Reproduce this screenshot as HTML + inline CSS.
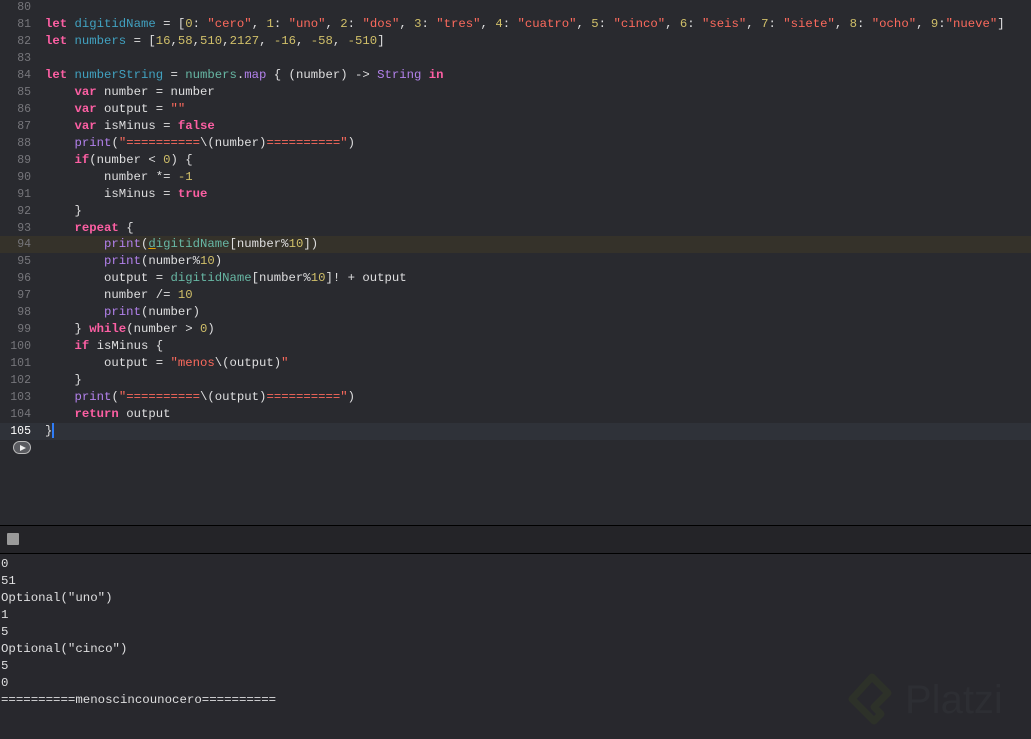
<!DOCTYPE html><html><head><style>
body{margin:0;width:1031px;height:739px;background:#292a2f;overflow:hidden;font-family:"Liberation Mono",monospace;font-size:12.3px;color:#dfdfe0;position:relative}
.l{position:absolute;left:0;width:1031px;height:17px;line-height:17px;white-space:pre}
.n{position:absolute;left:0;width:31px;text-align:right;color:#76767b;font-size:11.5px}
.c{position:absolute;left:45px}
.k{color:#fc5fa3;font-weight:bold}.s{color:#fc6a5d}.m{color:#d0bf69}.d{color:#41a1c0}.p{color:#67b7a4}.f{color:#b281eb}
.con{position:absolute;left:0;top:525px;width:1031px;height:214px;background:#28282d}
.o{position:absolute;left:1px;height:17px;line-height:17px;white-space:pre;font-size:12.4px}
</style></head><body>
<div class="l" style="top:236px;background:#35322a"></div>
<div class="l" style="top:423px;background:#2f3239"></div>
<div class="l" style="top:-1px"><span class="n">80</span></div>
<div class="l" style="top:16px"><span class="n">81</span><span class="c"><span class="k">let</span> <span class="d">digitidName</span> = [<span class="m">0</span>: <span class="s">"cero"</span>, <span class="m">1</span>: <span class="s">"uno"</span>, <span class="m">2</span>: <span class="s">"dos"</span>, <span class="m">3</span>: <span class="s">"tres"</span>, <span class="m">4</span>: <span class="s">"cuatro"</span>, <span class="m">5</span>: <span class="s">"cinco"</span>, <span class="m">6</span>: <span class="s">"seis"</span>, <span class="m">7</span>: <span class="s">"siete"</span>, <span class="m">8</span>: <span class="s">"ocho"</span>, <span class="m">9</span>:<span class="s">"nueve"</span>]</span></div>
<div class="l" style="top:33px"><span class="n">82</span><span class="c"><span class="k">let</span> <span class="d">numbers</span> = [<span class="m">16</span>,<span class="m">58</span>,<span class="m">510</span>,<span class="m">2127</span>, <span class="m">-16</span>, <span class="m">-58</span>, <span class="m">-510</span>]</span></div>
<div class="l" style="top:50px"><span class="n">83</span></div>
<div class="l" style="top:67px"><span class="n">84</span><span class="c"><span class="k">let</span> <span class="d">numberString</span> = <span class="p">numbers</span>.<span class="f">map</span> { (number) -&gt; <span class="f">String</span> <span class="k">in</span></span></div>
<div class="l" style="top:84px"><span class="n">85</span><span class="c">    <span class="k">var</span> number = number</span></div>
<div class="l" style="top:101px"><span class="n">86</span><span class="c">    <span class="k">var</span> output = <span class="s">""</span></span></div>
<div class="l" style="top:118px"><span class="n">87</span><span class="c">    <span class="k">var</span> isMinus = <span class="k">false</span></span></div>
<div class="l" style="top:135px"><span class="n">88</span><span class="c">    <span class="f">print</span>(<span class="s">"==========</span>\(number)<span class="s">=========="</span>)</span></div>
<div class="l" style="top:152px"><span class="n">89</span><span class="c">    <span class="k">if</span>(number &lt; <span class="m">0</span>) {</span></div>
<div class="l" style="top:169px"><span class="n">90</span><span class="c">        number *= <span class="m">-1</span></span></div>
<div class="l" style="top:186px"><span class="n">91</span><span class="c">        isMinus = <span class="k">true</span></span></div>
<div class="l" style="top:203px"><span class="n">92</span><span class="c">    }</span></div>
<div class="l" style="top:220px"><span class="n">93</span><span class="c">    <span class="k">repeat</span> {</span></div>
<div class="l" style="top:236px"><span class="n">94</span><span class="c">        <span class="f">print</span>(<span class="p" style="text-decoration:underline;text-decoration-color:#e0a000">d</span><span class="p">igitidName</span>[number%<span class="m">10</span>])</span></div>
<div class="l" style="top:253px"><span class="n">95</span><span class="c">        <span class="f">print</span>(number%<span class="m">10</span>)</span></div>
<div class="l" style="top:270px"><span class="n">96</span><span class="c">        output = <span class="p">digitidName</span>[number%<span class="m">10</span>]! + output</span></div>
<div class="l" style="top:287px"><span class="n">97</span><span class="c">        number /= <span class="m">10</span></span></div>
<div class="l" style="top:304px"><span class="n">98</span><span class="c">        <span class="f">print</span>(number)</span></div>
<div class="l" style="top:321px"><span class="n">99</span><span class="c">    } <span class="k">while</span>(number &gt; <span class="m">0</span>)</span></div>
<div class="l" style="top:338px"><span class="n">100</span><span class="c">    <span class="k">if</span> isMinus {</span></div>
<div class="l" style="top:355px"><span class="n">101</span><span class="c">        output = <span class="s">"menos</span>\(output)<span class="s">"</span></span></div>
<div class="l" style="top:372px"><span class="n">102</span><span class="c">    }</span></div>
<div class="l" style="top:389px"><span class="n">103</span><span class="c">    <span class="f">print</span>(<span class="s">"==========</span>\(output)<span class="s">=========="</span>)</span></div>
<div class="l" style="top:406px"><span class="n">104</span><span class="c">    <span class="k">return</span> output</span></div>
<div class="l" style="top:423px"><span class="n" style="color:#fff">105</span><span class="c">}<span style="display:inline-block;width:2px;height:15px;background:#2f7cf6;vertical-align:middle"></span></span></div>
<div style="position:absolute;left:13px;top:441px;width:18px;height:13px;border-radius:7px;background:#5a5b60;border:1px solid #bbb;box-sizing:border-box"><div style="position:absolute;left:6px;top:2.5px;width:0;height:0;border-left:6px solid #eee;border-top:3.5px solid transparent;border-bottom:3.5px solid transparent"></div></div>
<div class="con">
<div style="position:absolute;top:0;left:0;width:1031px;height:28px;background:#242428"></div>
<div style="position:absolute;top:0;left:0;width:1031px;height:1px;background:#000"></div>
<div style="position:absolute;top:28px;left:0;width:1031px;height:1px;background:#000"></div>
<div style="position:absolute;top:8px;left:7px;width:12px;height:12px;background:#9a9a9a;border-radius:1px"></div>
<div class="o" style="top:31px">0</div>
<div class="o" style="top:48px">51</div>
<div class="o" style="top:65px">Optional("uno")</div>
<div class="o" style="top:82px">1</div>
<div class="o" style="top:99px">5</div>
<div class="o" style="top:116px">Optional("cinco")</div>
<div class="o" style="top:133px">5</div>
<div class="o" style="top:150px">0</div>
<div class="o" style="top:167px">==========menoscincounocero==========</div>
<svg style="position:absolute;left:848px;top:148px" width="70" height="60"><path d="M24 4 L40 20 L26 34 L33 41 L26 48 L4 26 Z" fill="none" stroke="#2d3129" stroke-width="7" stroke-linejoin="round"/></svg>
<div style="position:absolute;left:905px;top:150px;font-family:'Liberation Sans',sans-serif;font-size:40px;color:#2d2e33;line-height:50px">Platzi</div>
</div>
</body></html>
